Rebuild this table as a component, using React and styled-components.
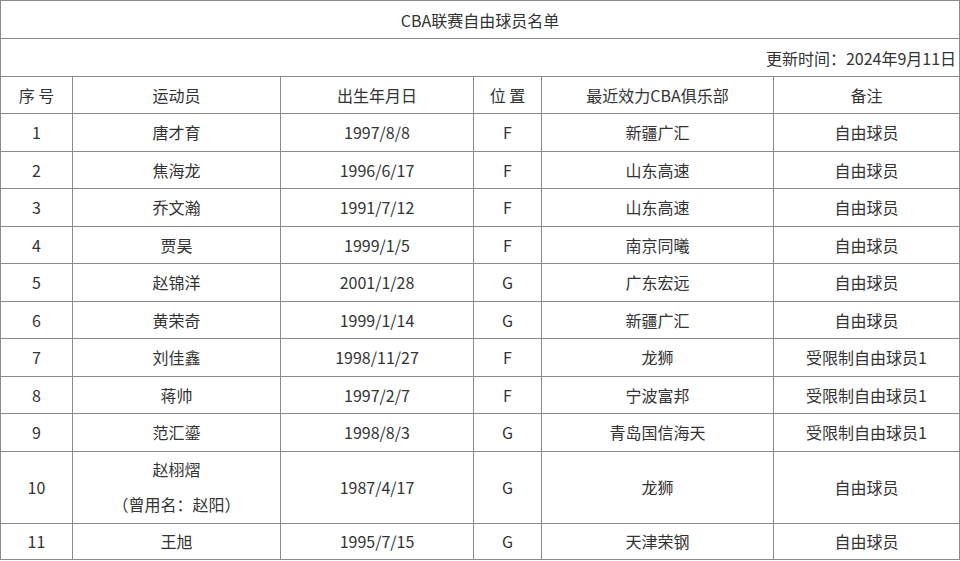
import React from "react";
import styled, { createGlobalStyle } from "styled-components";

const Global = createGlobalStyle`
  html, body { margin: 0; padding: 0; background: #fff; }
  body { font-family: "Noto Sans CJK SC", "Noto Sans", sans-serif; color: #333; }
`;

const Table = styled.table`
  width: 959px;
  border-collapse: collapse;
  table-layout: fixed;
  font-size: 16px;
  color: #333;
`;

const Cell = styled.td`
  border: 1px solid #8a8a8a;
  padding: 0;
  text-align: ${(p) => p.$align || "center"};
  vertical-align: middle;
  line-height: 20px;
  white-space: nowrap;
  padding-right: ${(p) => (p.$align === "right" ? "3px" : "0")};
`;

const Row = styled.tr`
  height: ${(p) => p.$h || 37.5}px;
`;

const Line = styled.div`
  line-height: 35px;
`;

const cols = [72, 208, 193, 68, 232, 186];

const data = [
  ["1", "唐才育", "1997/8/8", "F", "新疆广汇", "自由球员"],
  ["2", "焦海龙", "1996/6/17", "F", "山东高速", "自由球员"],
  ["3", "乔文瀚", "1991/7/12", "F", "山东高速", "自由球员"],
  ["4", "贾昊", "1999/1/5", "F", "南京同曦", "自由球员"],
  ["5", "赵锦洋", "2001/1/28", "G", "广东宏远", "自由球员"],
  ["6", "黄荣奇", "1999/1/14", "G", "新疆广汇", "自由球员"],
  ["7", "刘佳鑫", "1998/11/27", "F", "龙狮", "受限制自由球员1"],
  ["8", "蒋帅", "1997/2/7", "F", "宁波富邦", "受限制自由球员1"],
  ["9", "范汇鎏", "1998/8/3", "G", "青岛国信海天", "受限制自由球员1"],
  ["10", ["赵栩熠", "（曾用名：赵阳）"], "1987/4/17", "G", "龙狮", "自由球员"],
  ["11", "王旭", "1995/7/15", "G", "天津荣钢", "自由球员"],
];

const heights = [37.5, 37.5, 37.5, 37.5, 37.5, 37.5, 37.5, 37.5, 37.5, 72, 36];

export default function App() {
  return (
    <>
      <Global />
      <Table>
        <colgroup>
          {cols.map((w, i) => (
            <col key={i} style={{ width: w }} />
          ))}
        </colgroup>
        <tbody>
          <Row $h={38}>
            <Cell colSpan={6}>CBA联赛自由球员名单</Cell>
          </Row>
          <Row $h={38}>
            <Cell colSpan={6} $align="right">更新时间：2024年9月11日</Cell>
          </Row>
          <Row $h={37}>
            <Cell>序 号</Cell>
            <Cell>运动员</Cell>
            <Cell>出生年月日</Cell>
            <Cell>位 置</Cell>
            <Cell>最近效力CBA俱乐部</Cell>
            <Cell>备注</Cell>
          </Row>
          {data.map((r, i) => (
            <Row key={i} $h={heights[i]}>
              {r.map((c, j) => (
                <Cell key={j}>
                  {Array.isArray(c) ? c.map((l, k) => <Line key={k}>{l}</Line>) : c}
                </Cell>
              ))}
            </Row>
          ))}
        </tbody>
      </Table>
    </>
  );
}
